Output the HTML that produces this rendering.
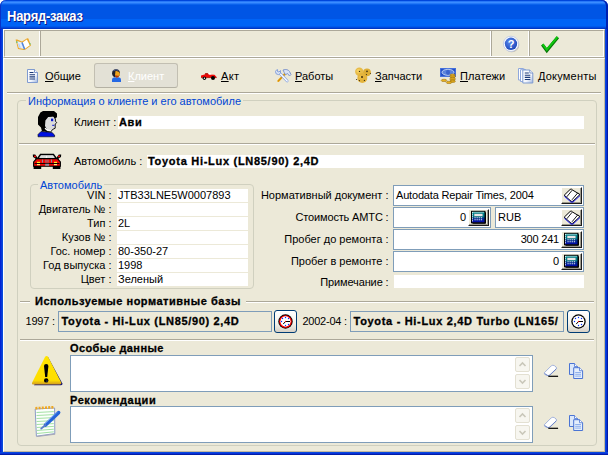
<!DOCTYPE html>
<html><head><meta charset="utf-8">
<style>
html,body{margin:0;padding:0;}
body{width:608px;height:455px;position:relative;overflow:hidden;background:#ECE9D8;font-family:"Liberation Sans",sans-serif;font-size:11px;color:#000;}
.a{position:absolute;}
.t{position:absolute;white-space:nowrap;line-height:13px;}
.r{text-align:right;}
.b{font-weight:bold;-webkit-text-stroke:0.3px #000;}
.w{background:#fff;}
.gb{position:absolute;border:1px solid #D0D0BF;border-radius:4px;box-sizing:border-box;}
.gt{position:absolute;background:#ECE9D8;color:#0046D5;white-space:nowrap;line-height:13px;padding:0 2px;}
.f{position:absolute;box-sizing:border-box;border:1px solid #7F9DB9;background:#fff;}
.hs{position:absolute;height:1px;background:#ACA899;box-shadow:0 1px 0 #fff;}
.vs{position:absolute;width:1px;background:#ACA899;box-shadow:1px 0 0 #fff;}
.cb{position:absolute;box-sizing:border-box;background:#ECE9D8;border:1px solid;border-color:#fff #1C1C1C #1C1C1C #fff;box-shadow:inset -1px -1px 0 #9C998C;}
.xb{position:absolute;box-sizing:border-box;border:1px solid #003C74;border-radius:3px;background:linear-gradient(#fff,#F3F2EC 60%,#D6D0C5);}
.sb{position:absolute;box-sizing:border-box;width:15px;height:15px;border:1px solid #E3E0D2;border-radius:2px;background:#F7F6F0;}
svg{position:absolute;overflow:visible;}
</style></head><body>
<!-- title bar -->
<div class="a" style="left:0;top:0;width:608px;height:10px;background:#fff;"></div>
<div class="a" id="title" style="left:0;top:0;width:608px;height:29px;border-radius:6px 6px 0 0;box-shadow:inset 1px 0 0 #0831C8,inset -2px 0 0 #0020B0;background:linear-gradient(#0046DC 0.5px,#2878F8 1.5px,#3A8CFF 2.5px,#2478F8 3.5px,#0A62EC 4.5px,#0055E5 5.5px,#0055E5 6.5px,#0055E5 7.5px,#0055E5 8.5px,#0055E5 9.5px,#0055E5 10.5px,#0055E5 11.5px,#0055E5 12.5px,#0055E5 13.5px,#0055E5 14.5px,#0055E5 15.5px,#0055E5 16.5px,#0055E5 17.5px,#0055E5 18.5px,#0063F6 19.5px,#0063F6 20.5px,#0063F6 21.5px,#0063F6 22.5px,#0063F6 23.5px,#0063F6 24.5px,#0063F6 25.5px,#0059EC 26.5px,#0048DC 27.5px,#0036C4 28.5px);"></div>
<div class="t b" style="left:7px;top:9px;font-size:13px;letter-spacing:-0.25px;line-height:16px;transform:scaleY(1.08);transform-origin:0 12.5px;color:#fff;-webkit-text-stroke:0;text-shadow:1px 1px #0A1883;">Наряд-заказ</div>
<!-- borders -->
<div class="a" style="left:0;top:29px;width:3px;height:426px;background:linear-gradient(90deg,#0019CF,#0831D9 40%,#0855DD);"></div>
<div class="a" style="left:605px;top:29px;width:3px;height:426px;background:linear-gradient(270deg,#00138C,#0831D9 50%,#0855DD);"></div>
<div class="a" style="left:0;top:452px;width:608px;height:3px;background:linear-gradient(0deg,#00138C,#0831D9 50%,#0855DD);"></div>
<!-- toolbar -->
<div class="a" style="left:3px;top:29px;width:602px;height:29px;box-sizing:border-box;border:1px solid;border-color:#fff #ACA899 #ACA899 #fff;"></div>
<div class="a" style="left:4px;top:30px;width:600px;height:27px;box-sizing:border-box;border:1px solid;border-color:#ACA899 #fff #fff #ACA899;"></div>
<div class="a" style="left:39px;top:31px;width:1px;height:25px;background:#fff;"></div><div class="a" style="left:40px;top:31px;width:1px;height:25px;background:#ACA899;"></div>
<div class="a" style="left:490px;top:31px;width:1px;height:25px;background:#fff;"></div><div class="a" style="left:491px;top:31px;width:1px;height:25px;background:#ACA899;"></div>
<div class="a" style="left:528px;top:31px;width:1px;height:25px;background:#fff;"></div><div class="a" style="left:529px;top:31px;width:1px;height:25px;background:#ACA899;"></div>

<div class="a" style="left:3px;top:58px;width:602px;height:394px;box-sizing:border-box;border:1px solid;border-color:#fff #C4B8A0 #C4B8A0 #fff;"></div>
<!-- tabs -->
<div class="a" style="left:94px;top:63px;width:84px;height:25px;box-sizing:border-box;border:1px solid #C2BFB2;border-bottom-color:#B4B1A4;border-radius:3px;background:#E3E1D6;"></div>
<div class="t" style="left:45px;top:70px;letter-spacing:-0.1px;"><u>О</u>бщие</div>
<div class="t" style="left:128px;top:70px;color:#fff;"><u>К</u>лиент</div>
<div class="t" style="left:221px;top:70px;letter-spacing:0.3px;"><u>А</u>кт</div>
<div class="t" style="left:295px;top:70px;"><u>Р</u>аботы</div>
<div class="t" style="left:375px;top:70px;"><u>З</u>апчасти</div>
<div class="t" style="left:460px;top:70px;letter-spacing:0.1px;"><u>П</u>латежи</div>
<div class="t" style="left:538px;top:70px;letter-spacing:0.2px;"><u>Д</u>окументы</div>

<div class="hs" style="left:7px;top:92px;width:594px;"></div>

<!-- group 1 -->
<div class="gb" style="left:17px;top:100px;width:580px;height:346px;"></div>
<div class="gt" style="left:26px;top:95px;">Информация о клиенте и его автомобиле</div>

<div class="t" style="left:74px;top:116px;">Клиент :</div>
<div class="a w" style="left:118px;top:116px;width:466px;height:13px;"></div>
<div class="t b" style="left:119px;top:116px;letter-spacing:0.6px;">Ави</div>

<div class="hs" style="left:19px;top:143px;width:576px;"></div>

<div class="t" style="left:74px;top:155px;">Автомобиль :</div>
<div class="a w" style="left:147px;top:155px;width:437px;height:13px;"></div>
<div class="t b" style="left:148px;top:155px;letter-spacing:0.71px;">Toyota Hi-Lux (LN85/90) 2,4D</div>

<!-- group Автомобиль -->
<div class="gb" style="left:30px;top:184px;width:224px;height:105px;"></div>
<div class="gt" style="left:38px;top:179px;">Автомобиль</div>
<div class="a" style="left:117px;top:189px;width:131px;height:97px;background:repeating-linear-gradient(#fff 0,#fff 13px,#ECE9D8 13px,#ECE9D8 14px);"></div>
<div class="t r" style="left:31px;width:80.5px;top:189px;">VIN :</div>
<div class="t r" style="left:31px;width:80.5px;top:203px;">Двигатель № :</div>
<div class="t r" style="left:31px;width:80.5px;top:217px;">Тип :</div>
<div class="t r" style="left:31px;width:80.5px;top:231px;">Кузов № :</div>
<div class="t r" style="left:31px;width:80.5px;top:245px;">Гос. номер :</div>
<div class="t r" style="left:31px;width:80.5px;top:259px;">Год выпуска :</div>
<div class="t r" style="left:31px;width:80.5px;top:273px;">Цвет :</div>
<div class="t" style="left:118px;top:189px;">JTB33LNE5W0007893</div>
<div class="t" style="left:118px;top:217px;">2L</div>
<div class="t" style="left:118px;top:245px;">80-350-27</div>
<div class="t" style="left:118px;top:259px;">1998</div>
<div class="t" style="left:118px;top:273px;">Зеленый</div>

<!-- right form -->
<div class="t r" style="left:255px;width:133.5px;top:189px;">Нормативный документ :</div>
<div class="t r" style="left:255px;width:133.5px;top:211px;letter-spacing:-0.15px;">Стоимость АМТС :</div>
<div class="t r" style="left:255px;width:133.5px;top:233px;">Пробег до ремонта :</div>
<div class="t r" style="left:255px;width:133.5px;top:255px;">Пробег в ремонте :</div>
<div class="t r" style="left:255px;width:133.5px;top:276px;letter-spacing:-0.12px;">Примечание :</div>

<div class="f" style="left:393px;top:185px;width:191px;height:21px;"></div>
<div class="f" style="left:393px;top:207px;width:98px;height:21px;"></div>
<div class="f" style="left:495px;top:207px;width:89px;height:21px;"></div>
<div class="f" style="left:393px;top:229px;width:191px;height:21px;"></div>
<div class="f" style="left:393px;top:251px;width:191px;height:21px;"></div>
<div class="a w" style="left:394px;top:275px;width:190px;height:13px;"></div>

<div class="t" style="left:396px;top:189px;letter-spacing:-0.18px;">Autodata Repair Times, 2004</div>
<div class="t r" style="left:400px;width:66px;top:211px;">0</div>
<div class="t" style="left:498px;top:211px;">RUB</div>
<div class="t r" style="left:400px;width:159px;top:233px;letter-spacing:-0.2px;">300 241</div>
<div class="t r" style="left:400px;width:159px;top:255px;">0</div>

<div class="cb" style="left:561px;top:187px;width:21px;height:17px;"></div>
<div class="cb" style="left:468px;top:209px;width:21px;height:17px;"></div>
<div class="cb" style="left:561px;top:209px;width:21px;height:17px;"></div>
<div class="cb" style="left:561px;top:231px;width:21px;height:17px;"></div>
<div class="cb" style="left:561px;top:253px;width:21px;height:17px;"></div>

<!-- normative bases -->
<div class="hs" style="left:20px;top:301px;width:10px;"></div>
<div class="hs" style="left:246px;top:301px;width:348px;"></div>
<div class="t b" style="left:35px;top:295px;letter-spacing:0.52px;">Используемые нормативные базы</div>
<div class="t" style="left:25.5px;top:314.5px;letter-spacing:-0.2px;">1997 :</div>
<div class="f" style="left:58px;top:311px;width:214px;height:21px;background:#ECE9D8;"></div>
<div class="t b" style="left:61.5px;top:314.5px;letter-spacing:0.66px;">Toyota - Hi-Lux (LN85/90) 2,4D</div>
<div class="xb" style="left:274px;top:310px;width:23px;height:23px;"></div>
<div class="t" style="left:302.5px;top:314.5px;letter-spacing:-0.25px;">2002-04 :</div>
<div class="f" style="left:350px;top:311px;width:214px;height:21px;background:#ECE9D8;overflow:hidden;"><div class="t b" style="left:2.6px;top:2.5px;letter-spacing:0.68px;">Toyota - Hi-Lux 2,4D Turbo (LN165/</div></div>
<div class="xb" style="left:567px;top:310px;width:23px;height:23px;"></div>

<div class="hs" style="left:20px;top:339px;width:574px;"></div>

<div class="t b" style="left:70px;top:342px;letter-spacing:0.39px;">Особые данные</div>
<div class="f" style="left:70px;top:355px;width:463px;height:37px;"></div>
<div class="sb" style="left:515px;top:357px;"></div>
<div class="sb" style="left:515px;top:374px;"></div>
<div class="t b" style="left:70px;top:393.5px;letter-spacing:0.57px;">Рекомендации</div>
<div class="f" style="left:70px;top:406px;width:463px;height:37px;"></div>
<div class="sb" style="left:515px;top:408px;"></div>
<div class="sb" style="left:515px;top:425px;"></div>

<svg width="608" height="455" viewBox="0 0 608 455" style="left:0;top:0;">
<defs>
<linearGradient id="pg" x1="0" y1="0" x2="1" y2="1"><stop offset="0" stop-color="#fff"/><stop offset="0.6" stop-color="#F4F7FD"/><stop offset="1" stop-color="#9DB4E0"/></linearGradient>
<radialGradient id="hb" cx="0.4" cy="0.35" r="0.7"><stop offset="0" stop-color="#5C8AEE"/><stop offset="1" stop-color="#1A44B8"/></radialGradient>
<linearGradient id="wy" x1="0" y1="0" x2="0" y2="1"><stop offset="0" stop-color="#FFE400"/><stop offset="0.85" stop-color="#FFDE00"/><stop offset="1" stop-color="#D09A20"/></linearGradient>
<linearGradient id="cl" x1="0" y1="0" x2="0" y2="1"><stop offset="0" stop-color="#009090"/><stop offset="0.45" stop-color="#007888"/><stop offset="0.6" stop-color="#003088"/><stop offset="1" stop-color="#0000B0"/></linearGradient>
<g id="doc">
 <path d="M0.5,0.5 H7.5 L10.5,3.5 V13.5 H0.5 Z" fill="url(#pg)" stroke="#7F9BD0" stroke-width="1"/>
 <path d="M7.5,0.5 V3.5 H10.5" fill="#fff" stroke="#5F7FC0" stroke-width="0.8"/>
 <path d="M2.5,3.5 H6.5 M2.5,5.7 H8 M2.5,7.9 H8 M2.5,10 H8" stroke="#1C3A78" stroke-width="1.1"/>
</g>
<g id="book">
 <path d="M0,6.2 L6,0.4 L7.4,0.2 L8.6,1.2 L15.8,5.5 L8.6,12.3 L7,12.3 Z" fill="#fff" stroke="#000" stroke-width="1" stroke-linejoin="round"/>
 <path d="M8,1.2 L2.6,7.8 M13.6,3.8 L7.8,10.8" stroke="#000" stroke-width="0.9" fill="none"/>
 <path d="M0.2,7.3 L6.8,13.1 L8.8,13.1 L15.8,6.6" stroke="#0000F0" stroke-width="0.9" fill="none"/>
</g>
<g id="calc">
 <rect x="0.5" y="0.5" width="13.5" height="11.5" fill="url(#cl)" stroke="#000" stroke-width="1"/>
 <path d="M1.5,1.5 H13.5" stroke="#fff" stroke-width="1" stroke-dasharray="1 1"/>
 <path d="M1.5,1.5 V10.5" stroke="#fff" stroke-width="1" stroke-dasharray="1 1"/>
 <rect x="3.3" y="3.2" width="8" height="2" fill="#fff" stroke="#B0B0B0" stroke-width="0.6"/>
 <path d="M3.5,6.9 H12 M3.5,9 H12" stroke="#fff" stroke-width="1.1" stroke-dasharray="1.1 1"/>
 <path d="M1.5,12.5 H14.5 M14.5,1.5 V12.5" stroke="#000" stroke-width="1"/>
</g>
<g id="clockface">
 <circle cx="0" cy="0" r="4.9" fill="#fff"/>
 <g fill="#0030FF"><circle cx="0" cy="-4" r="0.7"/><circle cx="0" cy="4" r="0.7"/><circle cx="-4" cy="0" r="0.7"/><circle cx="-3" cy="-3" r="0.7"/><circle cx="3" cy="-3" r="0.7"/><circle cx="3" cy="3" r="0.7"/></g>
 <path d="M0,0 H4.5 M0,0 L-2.3,2.6" stroke="#000" stroke-width="1" fill="none"/>
 <circle cx="0" cy="0" r="0.7" fill="#f00"/>
</g>
<g id="eraser">
 <path d="M0.5,8 L7.5,1 Q9,0 10.5,0.8 L12.3,2.2 Q13.3,3.3 12.2,4.5 L6,10.5 Q4.5,11.3 3,10.5 L0.8,9.5 Z" fill="#fff" stroke="#9AAAD8" stroke-width="0.9"/>
 <path d="M1,8.8 L3.5,10.5 Q4.8,11 6,10.2 L12.5,4" stroke="#6E86C8" stroke-width="1" fill="none"/>
 <path d="M4.5,11.5 H14.3" stroke="#000" stroke-width="1.2"/>
</g>
<g id="copy">
 <path d="M0.5,0.5 H5.5 L8.5,3.5 V11.5 H0.5 Z" fill="#DCE8FA" stroke="#4A74D4" stroke-width="1"/>
 <path d="M5.5,0.5 V3.5 H8.5" fill="#fff" stroke="#4A74D4" stroke-width="0.8"/>
 <path d="M4.7,4.7 H10.5 L13.6,7.7 V15.5 H4.7 Z" fill="#E4EEFC" stroke="#4A74D4" stroke-width="1"/>
 <path d="M10.5,4.7 V7.7 H13.6" fill="#fff" stroke="#4A74D4" stroke-width="0.8"/>
 <path d="M6.2,9.5 H12 M6.2,11.3 H12 M6.2,13.1 H12" stroke="#8FB0EC" stroke-width="1"/>
</g>
</defs>

<!-- toolbar book -->
<g>
 <path d="M15.6,39.6 L17.2,39.4 L22,41.6 L27.2,38.2 L28.4,38.6 L31,45.4 L25.2,49.8 L23.6,50 L18,49 Z" fill="#ECA82C"/>
 <path d="M16.8,41 L21.8,42.6 L24.2,49 L18.8,48 Z" fill="#E4EEFC"/>
 <path d="M22.6,42.4 L26.8,39.6 L29.8,45.2 L25,48.8 Z" fill="#FFFFFF"/>
 <path d="M22,42.6 L24.6,49.2" stroke="#4C86E8" stroke-width="1.5"/>
 <path d="M18.6,43.6 L20.2,48" stroke="#B4D0F8" stroke-width="1.2"/>
 <rect x="16.2" y="41.4" width="1.4" height="1.4" fill="#58C070"/>
 <rect x="29.4" y="43.2" width="1.2" height="1.4" fill="#58C070"/>
</g>
<!-- help -->
<g>
 <circle cx="511.8" cy="44.8" r="7.5" fill="#A8A498" opacity="0.6"/>
 <circle cx="511" cy="43.8" r="7.6" fill="#fff" stroke="#B8C4E4" stroke-width="0.8"/>
 <circle cx="511" cy="43.8" r="6.2" fill="url(#hb)"/>
 <text x="511" y="47.6" text-anchor="middle" font-family="Liberation Sans, sans-serif" font-weight="bold" font-size="11" fill="#fff">?</text>
</g>
<!-- check -->
<g>
 <path d="M542.3,44.6 L546.8,50.6 L557.8,37.2" fill="none" stroke="#087808" stroke-width="3.2" stroke-linejoin="miter"/>
 <path d="M542.6,44.2 L546.8,49.6 L557.6,36.8" fill="none" stroke="#10C810" stroke-width="2" stroke-linejoin="miter"/>
</g>

<!-- tab icons -->
<use href="#doc" x="27" y="69"/>
<!-- person small -->
<g>
 <path d="M112,82 V79.5 Q112,77.5 114.5,77.3 H118.5 Q121,77.5 121,79.5 V82 Z" fill="#2468E4"/>
 <circle cx="116" cy="73.2" r="3.9" fill="#20202C"/>
 <path d="M115.5,71 Q119,70.5 120,73.5 Q120,76.5 117,77.6 Q115,77 115,75 Z" fill="#F0A41C"/>
 <path d="M115.2,75.2 Q117.5,76 119.3,75.5 Q118.5,77.6 116.8,77.8 Q115.3,77.2 115.2,75.2 Z" fill="#B43410"/>
 <path d="M113,70.8 Q116,69 118.6,70.4" stroke="#4C5C8C" stroke-width="1" fill="none"/>
</g>
<!-- small car -->
<g>
 <path d="M201,77 V75.6 L204.5,74.4 L206,73.2 H208 L209,74.6 L214.5,74.8 L216.8,77.2 L216,77.8 H201.5 Z" fill="#F00808"/>
 <path d="M204.8,73.2 H207.6 L208,74.6 H205.5 Z" fill="#9C2010"/>
 <path d="M208.2,72.8 H210 L211.6,74.6 H208.8 Z" fill="#fff"/>
 <path d="M201,77.6 H216.6" stroke="#A02010" stroke-width="0.8"/>
 <circle cx="204.4" cy="78.2" r="1.7" fill="#000"/><circle cx="204.4" cy="78.2" r="0.7" fill="#fff"/>
 <circle cx="213" cy="78" r="2" fill="#000"/>
</g>
<!-- tools -->
<g>
 <path d="M278.3,81 L285.8,73" stroke="#E8A010" stroke-width="2" stroke-linecap="round"/>
 <path d="M278.3,81 L285.8,73" stroke="#704800" stroke-width="0.5" stroke-dasharray="0.5 0.8"/>
 <path d="M283,70 Q287.5,68.5 289.5,71.5 L291,74.5 L289.5,76 L287.5,73.5 L285.5,74.8 L284.3,72.6 Z" fill="#D8E2F6" stroke="#7890C8" stroke-width="0.9"/>
 <path d="M279.5,73 L287.2,81" stroke="#88A4E0" stroke-width="2.6" stroke-linecap="round"/>
 <path d="M279.5,73 L287.2,81" stroke="#fff" stroke-width="1.2" stroke-linecap="round"/>
 <path d="M275.5,71.5 Q275.2,74.5 278.5,74.6 Q281.5,74 280.5,70.5 L279,72 L277.5,71.6 L277.6,69.6 Q276,69.8 275.5,71.5 Z" fill="#DCE6F8" stroke="#7C98D8" stroke-width="0.9"/>
</g>
<!-- parts -->
<g>
 <circle cx="359.3" cy="71.8" r="4.2" fill="#E8BC48"/>
 <circle cx="367" cy="72.3" r="3.9" fill="#DEAE34"/>
 <circle cx="362.3" cy="78" r="5" fill="#E4B43C"/>
 <circle cx="358.5" cy="71" r="2" fill="#F4D060"/>
 <circle cx="360.8" cy="77" r="1.6" fill="#F0C448"/>
 <g fill="#3C2C10"><circle cx="359.5" cy="71.4" r="0.7"/><circle cx="367" cy="71.4" r="0.8"/><circle cx="366.4" cy="74.6" r="0.6"/><circle cx="362" cy="77" r="1"/><circle cx="356.6" cy="79.5" r="0.6"/><circle cx="359.4" cy="80.6" r="0.6"/><circle cx="364.4" cy="80.4" r="0.6"/><circle cx="370.4" cy="73.4" r="0.5"/></g>
</g>
<!-- payments -->
<g>
 <rect x="440" y="68" width="16" height="8.8" fill="#2450C8"/>
 <rect x="440.5" y="68.5" width="15" height="7.8" fill="none" stroke="#4C78E0" stroke-width="0.8"/>
 <ellipse cx="448" cy="72.3" rx="6" ry="3" fill="#5C84DC" stroke="#C8D8F4" stroke-width="0.9"/>
 <ellipse cx="448" cy="72.3" rx="2" ry="2.6" fill="#3C64CC"/>
 <g fill="#E8B020" stroke="#8C6408" stroke-width="0.5">
  <ellipse cx="452.6" cy="81.4" rx="2.8" ry="1.1"/><ellipse cx="452.6" cy="79.8" rx="2.8" ry="1.1"/><ellipse cx="452.6" cy="78.2" rx="2.8" ry="1.1"/><ellipse cx="452.6" cy="76.6" rx="2.8" ry="1.1"/><ellipse cx="452.6" cy="75" rx="2.8" ry="1.1"/>
  <ellipse cx="444" cy="80.4" rx="2.8" ry="1.2"/><ellipse cx="449" cy="82.4" rx="2.8" ry="1.2"/>
 </g>
</g>
<!-- documents -->
<g>
 <path d="M518.5,68.5 H523.5 L526,70.5 V80 H518.5 Z" fill="#fff" stroke="#8FA8DC" stroke-width="1"/>
 <path d="M520.5,69.7 H525.5 L528,71.7 V81.5 H520.5 Z" fill="#fff" stroke="#8FA8DC" stroke-width="1"/>
</g>
<use href="#doc" x="522.3" y="69.5"/>

<!-- client big -->
<g>
 <path d="M41,131.5 L52,132.5 L54.6,135 V136.8 H38 V134.5 Z" fill="#0010E0" stroke="#000" stroke-width="0.6"/>
 <path d="M47,116.5 L53.5,116 L55.4,119 V121.2 L56.8,122.6 L55.2,124 V128.2 L52.4,129.6 L51,131.8 L45.6,131.4 L44,127 L44.5,120.5 Z" fill="#DCDCDC" stroke="#000" stroke-width="0.9"/>
 <path d="M43,111 H54 L57,113.6 V117.2 L54.8,118.4 L53.2,116.2 L48.2,117 L45.4,120.6 L45,126 L46.4,128.4 L47.4,131.4 H42 L41,127.4 L38,124.4 V117 L40.4,112.6 Z" fill="#000"/>
 <path d="M45.2,128 Q46,130.6 51,130.6" stroke="#fff" stroke-width="1.2" fill="none"/>
 <rect x="51" y="118.6" width="2.2" height="2.6" fill="#0818D0"/>
 <rect x="52.2" y="124.8" width="2.2" height="1" fill="#0818D0"/>
</g>
<!-- car big -->
<g>
 <path d="M40.5,154.5 H53.5 L56.5,158.5 H37.5 Z" fill="#CCCCCC" stroke="#000" stroke-width="1.3"/>
 <path d="M41,156 H53 M39.8,157.4 H54.2" stroke="#F4F4F4" stroke-width="0.8"/>
 <path d="M46.5,155.5 L47.4,157.8 L45.6,157.8 Z" fill="#fff"/>
 <path d="M32.8,154.6 L35.2,154.6 L37.4,157.4 L37.6,160 L35.6,160 L35.4,158.4 L33,157 Z M61.2,154.6 L58.8,154.6 L56.6,157.4 L56.4,160 L58.4,160 L58.6,158.4 L61,157 Z" fill="#000"/>
 <rect x="34" y="155.6" width="2" height="1.6" fill="#F00808"/><rect x="58" y="155.6" width="2" height="1.6" fill="#F00808"/>
 <path d="M33.6,166.2 V162 L36.6,158.6 H57.4 L60.4,162 V166.2 Z" fill="#F00808" stroke="#000" stroke-width="1.1"/>
 <rect x="33.6" y="166" width="7.6" height="3" fill="#000"/><rect x="52.8" y="166" width="7.6" height="3" fill="#000"/>
 <rect x="34.6" y="163" width="24.8" height="0.9" fill="#000"/>
 <path d="M42.5,159.6 V162.6 M46,159.6 V162.6 M48,159.6 V162.6 M51.5,159.6 V162.6" stroke="#8C8C9C" stroke-width="1"/>
 <rect x="45.2" y="163.8" width="3.8" height="2" fill="#8C8C9C"/>
 <rect x="37" y="161.8" width="3" height="1.2" fill="#FFE820"/><rect x="54" y="161.8" width="3" height="1.2" fill="#FFE820"/>
 <rect x="37" y="164" width="3" height="1.2" fill="#FFF080"/><rect x="54" y="164" width="3" height="1.2" fill="#FFF080"/>
</g>

<!-- field buttons icons -->
<use href="#book" x="564.2" y="189"/>
<use href="#book" x="564.2" y="211"/>
<use href="#calc" x="471" y="210.8"/>
<use href="#calc" x="564" y="232.8"/>
<use href="#calc" x="564" y="254.8"/>

<!-- clocks -->
<g transform="translate(285.5,321.5)">
 <circle r="7.2" fill="#000"/><circle r="6.3" fill="#FF0000"/><circle r="4.9" fill="#fff"/><use href="#clockface"/>
</g>
<g transform="translate(578.5,321.5)">
 <circle r="7.2" fill="#000"/><circle r="5.9" fill="#fff"/><use href="#clockface"/>
</g>

<!-- warning -->
<g>
 <path d="M48,357 L62.4,383.4 Q62.8,385 61,385.2 H34 Z" fill="#101070"/>
 <path d="M46.5,356 Q47.6,356 48.2,357 L61.2,382.4 Q61.8,384.4 59.8,384.5 H33.4 Q31.4,384.4 32.2,382.4 L45,357 Q45.6,356 46.5,356 Z" fill="url(#wy)"/>
 <path d="M44,366 Q44,364 46.2,364 Q48.4,364 48.4,366 L47.2,377 H45.2 Z" fill="#000"/>
 <circle cx="46.2" cy="380.4" r="2.2" fill="#000"/>
 <circle cx="47" cy="381" r="0.6" fill="#7080C0"/>
</g>
<!-- notepad -->
<g>
 <path d="M35.2,409 L54.6,408 L54.8,433.6 L36.4,436.2 Z" fill="#FBFFFB" stroke="#8C9CC8" stroke-width="1"/>
 <path d="M36.5,412.5 L53.8,411.6 M36.5,415.5 L53.8,414.6 M36.5,418.5 L53.8,417.6 M36.6,421.5 L53.8,420.6 M36.6,424.5 L53.8,423.6 M36.8,427.5 L53.8,426.4 M36.8,430.5 L53.8,429.2 M37,433.5 L53.8,431.8" stroke="#98DC98" stroke-width="0.9"/>
 <path d="M35.4,408.2 L54.4,407.2" stroke="#F0A820" stroke-width="2.6" stroke-dasharray="2 1.2"/>
 <path d="M36.6,436.6 L55.2,434.2" stroke="#A8A8B8" stroke-width="1"/>
 <path d="M58.6,412.6 L45.5,425" stroke="#2464D8" stroke-width="3.6" stroke-linecap="round"/>
 <path d="M57.6,411.8 L45,423.8" stroke="#6C9CF0" stroke-width="1"/>
 <path d="M45.5,425 L41.2,428.6" stroke="#5C7CC8" stroke-width="1.8" stroke-linecap="round"/>
</g>
<!-- eraser + copy -->
<use href="#eraser" x="543.8" y="364.8"/>
<use href="#copy" x="569" y="363"/>
<use href="#eraser" x="543.8" y="416.8"/>
<use href="#copy" x="569" y="415"/>

<!-- scroll arrows -->
<g stroke="#C9C7BA" stroke-width="1.6" fill="none">
 <path d="M519.5,366 L522.5,363 L525.5,366"/>
 <path d="M519.5,380 L522.5,383 L525.5,380"/>
 <path d="M519.5,417 L522.5,414 L525.5,417"/>
 <path d="M519.5,431 L522.5,434 L525.5,431"/>
</g>
</svg>

</body></html>
